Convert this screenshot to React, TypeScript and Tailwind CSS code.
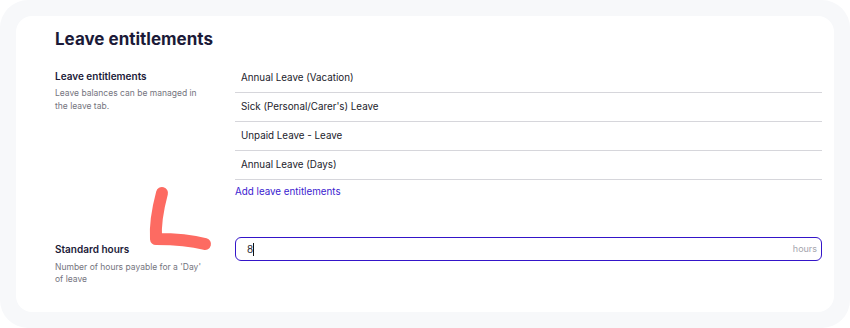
import React from 'react';

const entitlements = [
    'Annual Leave (Vacation)',
    "Sick (Personal/Carer's) Leave",
    'Unpaid Leave - Leave',
    'Annual Leave (Days)',
];

const Scribble: React.FC = () => (
    <svg
        className="pointer-events-none absolute left-0 top-0"
        width="850"
        height="328"
        viewBox="0 0 850 328"
    >
        <path
            d="M162 193 C158 208 155 224 156 239 C172 239 190 240 205 244"
            fill="none"
            stroke="#fd6b62"
            strokeWidth="12"
            strokeLinecap="round"
            strokeLinejoin="round"
        />
    </svg>
);

export default function App() {
    return (
        <div className="relative h-[328px] w-[850px] bg-white font-['Inter',sans-serif]">
            <div className="h-full rounded-[28px] bg-[#f7f8fa] p-4">
                <div className="h-full rounded-2xl bg-white pl-[39px] pr-3 pt-[11px]">
                    <h1 className="text-[17px] font-bold leading-6 text-[#1b1a38]">Leave entitlements</h1>

                    <div className="mt-[13px] flex">
                        <div className="w-[180px] shrink-0 pt-[5px]">
                            <div className="text-[10px] font-semibold leading-[14px] text-[#1b1a38]">Leave entitlements</div>
                            <p className="mt-[4px] w-[148px] text-[8.5px] leading-[12.5px] text-[#74747e]">
                                Leave balances can be managed in the leave tab.
                            </p>
                        </div>
                        <div className="flex-1">
                            {entitlements.map((name) => (
                                <div
                                    key={name}
                                    className="flex h-[29px] items-center border-b border-[#d6d6db] pl-[6px] text-[9.8px] text-[#22222b]"
                                >
                                    {name}
                                </div>
                            ))}
                            <a className="mt-[5px] block text-[9.8px] leading-[14px] text-[#3a22cf]" href="#">
                                Add leave entitlements
                            </a>
                        </div>
                    </div>

                    <div className="mt-[38px] flex">
                        <div className="w-[180px] shrink-0 pt-[5px]">
                            <div className="text-[10px] font-semibold leading-[14px] text-[#1b1a38]">Standard hours</div>
                            <p className="mt-[5px] w-[148px] text-[8.5px] leading-[12px] text-[#74747e]">
                                Number of hours payable for a 'Day' of leave
                            </p>
                        </div>
                        <div className="flex h-[24px] flex-1 items-center rounded-md border-[1.5px] border-[#3415c9] pl-[11px] pr-1">
                            <span className="text-[10px] text-[#26262f]">8</span>
                            <span className="h-[13px] w-px bg-[#111]" />
                            <span className="ml-auto text-[9px] text-[#a5a5ad]">hours</span>
                        </div>
                    </div>
                </div>
            </div>
            <Scribble />
        </div>
    );
}
